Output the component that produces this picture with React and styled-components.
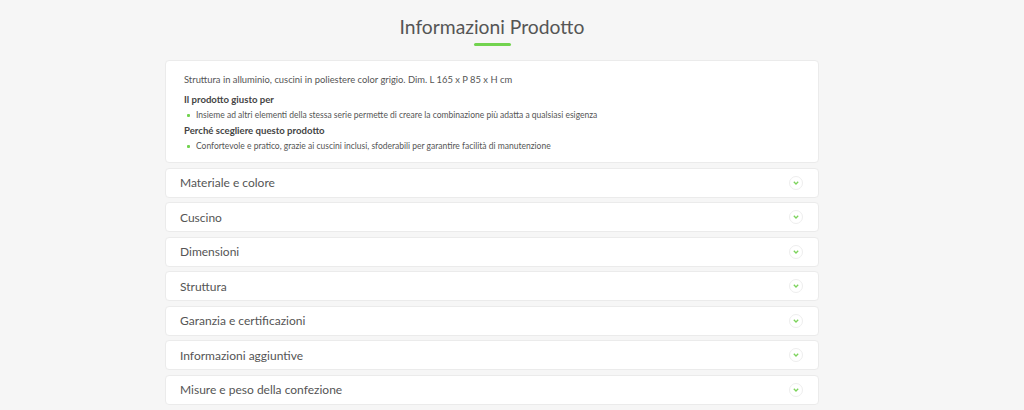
import React from 'react'
import styled, { createGlobalStyle } from 'styled-components'

const Global = createGlobalStyle`
  body {
    margin: 0;
    background: #f6f6f6;
    font-family: Lato, "Open Sans", sans-serif;
    color: #444;
  }
`

const Page = styled.div`
  display: flex;
  flex-direction: column;
  align-items: center;
  padding: 13px 40px 0 0;
`

const Title = styled.h2`
  margin: 0;
  font-family: Lato, sans-serif;
  font-weight: 400;
  font-size: 19.3px;
  line-height: 28px;
  color: #555;
`

const Underline = styled.div`
  width: 37px;
  height: 3px;
  border-radius: 2px;
  background: #72d34f;
  margin-top: 2px;
`

const List = styled.div`
  width: 654px;
  margin-top: 14px;
  display: flex;
  flex-direction: column;
  gap: 4.5px;
`

const Card = styled.div`
  background: #fff;
  border: 1px solid #ebebeb;
  border-radius: 4px;
`

const Summary = styled(Card)`
  padding: 13px 18px 6px;
  color: #555;
`

const Lead = styled.p`
  margin: 0 0 9px;
  font-size: 9.4px;
`

const Heading = styled.h4`
  margin: 0 0 5px;
  font-size: 9.6px;
  font-weight: 700;
  color: #444;
`

const Bullets = styled.ul`
  list-style: none;
  margin: 0 0 5px;
  padding: 0;
  li {
    display: flex;
    align-items: center;
    gap: 6px;
    font-size: 8.5px;
    padding-left: 3px;
  }
  li::before {
    content: '';
    width: 3px;
    height: 3px;
    border-radius: 1px;
    background: #72d34f;
  }
`

const Row = styled(Card)`
  height: 28px;
  display: flex;
  align-items: center;
  justify-content: space-between;
  padding: 0 15px 0 14px;
  font-size: 12px;
  color: #555;
`

const Toggle = styled.span`
  width: 12px;
  height: 12px;
  border: 1px solid #eee;
  border-radius: 50%;
  display: flex;
  align-items: center;
  justify-content: center;
`

const sections = [
  'Materiale e colore',
  'Cuscino',
  'Dimensioni',
  'Struttura',
  'Garanzia e certificazioni',
  'Informazioni aggiuntive',
  'Misure e peso della confezione',
]

export default function App() {
  return (
    <Page>
      <Global />
      <Title>Informazioni Prodotto</Title>
      <Underline />
      <List>
        <Summary>
          <Lead>Struttura in alluminio, cuscini in poliestere color grigio. Dim. L 165 x P 85 x H cm</Lead>
          <Heading>Il prodotto giusto per</Heading>
          <Bullets>
            <li>Insieme ad altri elementi della stessa serie permette di creare la combinazione più adatta a qualsiasi esigenza</li>
          </Bullets>
          <Heading>Perché scegliere questo prodotto</Heading>
          <Bullets>
            <li>Confortevole e pratico, grazie ai cuscini inclusi, sfoderabili per garantire facilità di manutenzione</li>
          </Bullets>
        </Summary>
        {sections.map((s) => (
          <Row key={s}>
            {s}
            <Toggle>
              <svg width="6" height="4" viewBox="0 0 6 4">
                <path d="M0.8 0.8 L3 3 L5.2 0.8" fill="none" stroke="#7bd35a" strokeWidth="1.3" />
              </svg>
            </Toggle>
          </Row>
        ))}
      </List>
    </Page>
  )
}
